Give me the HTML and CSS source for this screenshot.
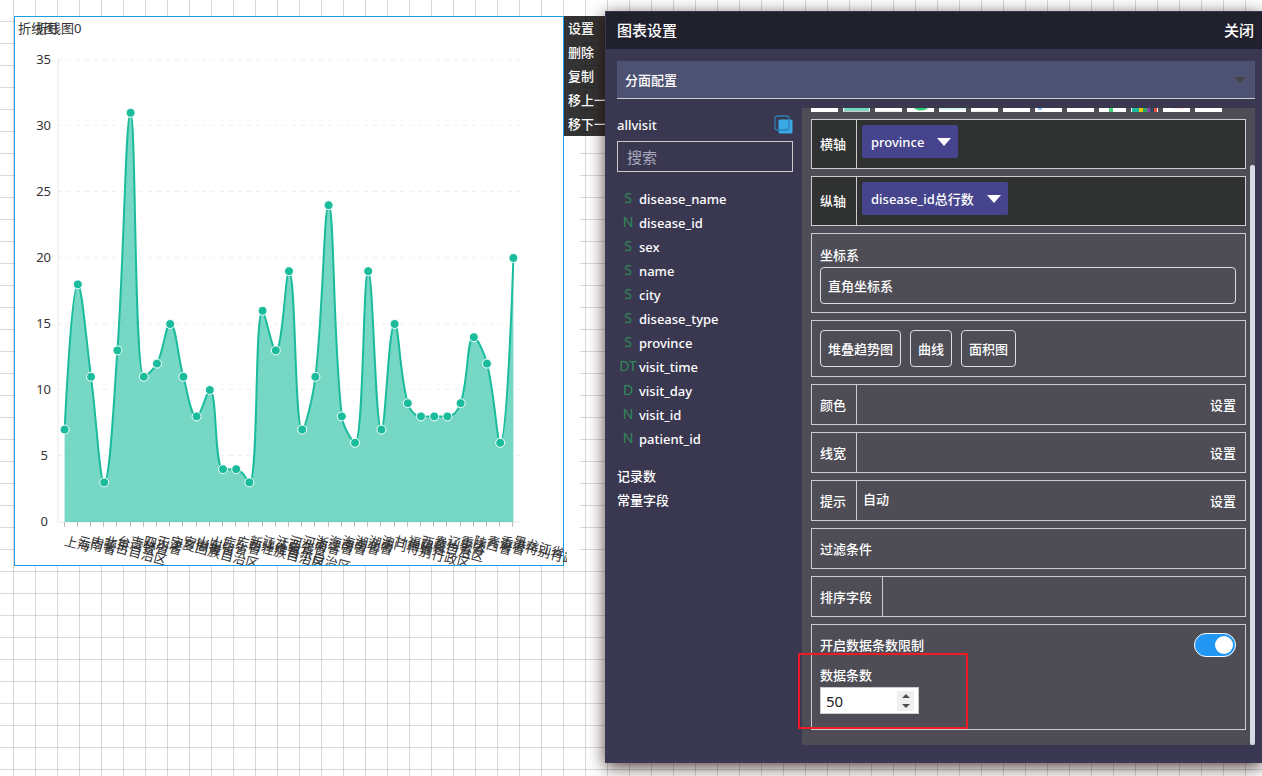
FILE: index.html
```html
<!DOCTYPE html>
<html lang="zh-CN">
<head>
<meta charset="utf-8">
<title>图表设置</title>
<link rel="stylesheet" href="styles.css">
</head>
<body>
<main class="board">
  <section class="widget">
    <div class="widget-frame">
      <svg class="chart" id="chart" width="552" height="548" role="img" aria-label="折线图0"></svg>
    </div>
    <div class="widget-menu">
      <button>设置</button>
      <button>删除</button>
      <button>复制</button>
      <button>移上一层</button>
      <button>移下一层</button>
    </div>
  </section>

  <section class="panel">
    <header class="panel-head">
      <h1>图表设置</h1>
      <button class="plain close">关闭</button>
    </header>
    <div class="panel-body">
      <div class="facet">
        <select class="facet-select" aria-label="分面配置"><option>分面配置</option></select>
        <svg class="facet-arrow" width="12" height="7"><path d="M0 0H12L6 7Z" fill="#46464a"/></svg>
      </div>
      <div class="columns">
        <aside class="fields">
          <div class="source">
            <span>allvisit</span>
            <button class="plain copy" aria-label="复制">
              <svg width="19" height="19"><rect x="4.500" y="4.500" width="14" height="14" rx="1.500" fill="#38a9e4"/><rect x="1" y="1" width="14" height="14" rx="2.500" fill="none" stroke="#2e7fb3" stroke-width="1.300"/></svg>
            </button>
          </div>
          <input class="search" type="text" placeholder="搜索" aria-label="搜索">
          <ul class="field-list">
            <li><i>S</i><span>disease_name</span></li>
            <li><i>N</i><span>disease_id</span></li>
            <li><i>S</i><span>sex</span></li>
            <li><i>S</i><span>name</span></li>
            <li><i>S</i><span>city</span></li>
            <li><i>S</i><span>disease_type</span></li>
            <li><i>S</i><span>province</span></li>
            <li><i>DT</i><span>visit_time</span></li>
            <li><i>D</i><span>visit_day</span></li>
            <li><i>N</i><span>visit_id</span></li>
            <li><i>N</i><span>patient_id</span></li>
          </ul>
          <ul class="extra-list">
            <li>记录数</li>
            <li>常量字段</li>
          </ul>
        </aside>

        <div class="options">
          <div class="types">
            <span class="thumb"></span>
            <span class="thumb area"></span>
            <span class="thumb ticks"></span>
            <span class="thumb pie"></span>
            <span class="thumb mint"></span>
            <span class="thumb ticks"></span>
            <span class="thumb"></span>
            <span class="thumb dot"></span>
            <span class="thumb"></span>
            <span class="thumb bar"></span>
            <span class="thumb colors"></span>
            <span class="thumb peach"></span>
            <span class="thumb"></span>
          </div>
          <div class="card axis">
            <span class="label">横轴</span>
            <button class="chip">province<svg width="14" height="8"><path d="M0 0H14L7 8Z" fill="#fff"/></svg></button>
          </div>
          <div class="card axis">
            <span class="label">纵轴</span>
            <button class="chip">disease_id总行数<svg width="14" height="8"><path d="M0 0H14L7 8Z" fill="#fff"/></svg></button>
          </div>
          <div class="card stack">
            <label for="coord">坐标系</label>
            <select class="coord" id="coord"><option>直角坐标系</option></select>
          </div>
          <div class="card modes">
            <button>堆叠趋势图</button>
            <button>曲线</button>
            <button>面积图</button>
          </div>
          <div class="card row"><span class="label">颜色</span><span class="value"></span><button class="plain">设置</button></div>
          <div class="card row"><span class="label">线宽</span><span class="value"></span><button class="plain">设置</button></div>
          <div class="card row"><span class="label">提示</span><span class="value">自动</span><button class="plain">设置</button></div>
          <div class="card row"><span class="label open">过滤条件</span></div>
          <div class="card row"><span class="label">排序字段</span></div>
          <div class="card limit">
            <div class="limit-head">
              <label for="limit">开启数据条数限制</label>
              <input class="switch" id="limit" type="checkbox" checked>
            </div>
            <label for="count">数据条数</label>
            <div class="number">
              <input id="count" type="number" value="50">
              <div class="spin">
                <button aria-label="增加"><svg width="8" height="4"><path d="M0 4L4 0L8 4Z" fill="#505050"/></svg></button>
                <button aria-label="减少"><svg width="8" height="4"><path d="M0 0L4 4L8 0Z" fill="#505050"/></svg></button>
              </div>
            </div>
          </div>
          <div class="scroll-thumb"></div>
        </div>
      </div>
    </div>
    <div class="highlight"></div>
  </section>
</main>
<script src="chart.js"></script>
</body>
</html>
```
FILE: styles.css
```css
* { box-sizing: border-box; }

body {
  margin: 0;
  font: 13px/24px "Noto Sans", "Noto Sans CJK SC", sans-serif;
  color: #fff;
}

button, input, select { font: inherit; color: inherit; }
button { cursor: pointer; }
ul { list-style: none; margin: 0; padding: 0; }

.board {
  position: relative;
  height: 100vh;
  overflow: hidden;
  background-color: #fff;
  background-image:
    linear-gradient(90deg, rgba(0, 0, 0, .15) 1px, transparent 1px),
    linear-gradient(rgba(0, 0, 0, .15) 1px, transparent 1px);
  background-size: 22px 22px;
  background-position: 13px 21px;
}

/* chart widget on the free canvas */
.widget {
  position: absolute;
  left: 14px;
  top: 16px;
  width: 566px;
  background: #fff;
}
.widget-frame {
  width: 550px;
  height: 550px;
  border: 1px solid #1b9de2;
}
.chart { display: block; overflow: hidden; }
.chart text { font-size: 13px; fill: #333; }
.chart .grid { stroke: #f0f0f0; stroke-dasharray: 4 5; }
.chart .axis-line { stroke: #f3f3f3; stroke-width: 2; }
.chart .tick { stroke: #bbb; }
.chart .fill { fill: #1abc9c; fill-opacity: .6; }
.chart .line { fill: none; stroke: #1abc9c; stroke-width: 2; }
.chart .point { fill: #1abc9c; stroke: #fff; }

.widget-menu {
  position: absolute;
  left: 550px;
  top: 0;
  display: flex;
  flex-direction: column;
  background: rgba(0, 0, 0, .8);
}
.widget-menu button {
  height: 24px;
  padding: 0 4px;
  border: 0;
  background: none;
  text-align: left;
  white-space: nowrap;
  line-height: 22px;
  font-weight: 500;
}

/* settings window */
.panel {
  position: absolute;
  left: 605px;
  right: 0;
  top: 11px;
  bottom: 13px;
  display: flex;
  flex-direction: column;
  border: 1px solid #3a3850;
  border-right: 0;
  background: #3a3850;
  box-shadow: 0 4px 16px rgba(30, 0, 0, .75);
  font-weight: 500;
}
.panel-head {
  display: flex;
  justify-content: space-between;
  align-items: center;
  height: 37px;
  padding: 0 8px 2px 11px;
  background: #21202d;
}
.panel-head h1, .close { margin: 0; font-size: 15px; font-weight: 500; }
.plain { padding: 0; border: 0; background: none; }

.panel-body {
  flex: 1;
  display: flex;
  flex-direction: column;
  gap: 9px;
  padding: 12px 7px 17px 11px;
  min-height: 0;
}
.facet { position: relative; }
.facet-select {
  display: block;
  appearance: none;
  width: 100%;
  height: 38px;
  padding: 0 8px;
  border: 0;
  border-bottom: 1px solid #d0d0d4;
  border-radius: 0;
  background: #4e5272;
}
.facet-arrow { position: absolute; right: 9px; top: 16px; }

.columns { flex: 1; display: flex; gap: 9px; min-height: 0; }

.fields { width: 176px; padding-top: 4px; }
.source { display: flex; justify-content: space-between; align-items: center; height: 25px; }
.copy svg { display: block; }
.search {
  display: block;
  width: 100%;
  height: 31px;
  margin-top: 4px;
  padding: 0 9px;
  border: 1px solid #ccc;
  background: none;
  font-size: 15px;
}
.search::placeholder { color: #a9a9bd; opacity: 1; font-weight: 400; }
.field-list { margin-top: 15px; }
.field-list li { display: flex; height: 24px; }
.field-list i {
  width: 22px;
  text-align: center;
  color: #2e8b57;
  font-style: normal;
  font-weight: 400;
  font-size: 14px;
  line-height: 22px;
}
.extra-list { margin-top: 13px; }

.options {
  position: relative;
  flex: 1;
  display: flex;
  flex-direction: column;
  gap: 7px;
  min-width: 0;
  padding: 0 9px 15px;
  background: #4e4d56;
}
.types { display: flex; gap: 5px; height: 4px; }
.thumb { width: 27px; background: #fff; }
.thumb.area { background: linear-gradient(90deg, #fff 1px, #76d7c4 1px 26px, #fff 26px); border-bottom: 1px solid #ccc; }
.thumb.ticks { border-bottom: 1px solid #eee; }
.thumb.pie { background: radial-gradient(ellipse 8px 3px at 14px 0, #2ecc71 60%, #fff); }
.thumb.mint { background: linear-gradient(#d9f3ed 2px, #fff 2px); }
.thumb.dot { background: linear-gradient(90deg, #fff 3px, #8ac4ff 3px 7px, #fff 7px) 0 0 / 100% 2px no-repeat #fff; }
.thumb.bar { background: linear-gradient(90deg, #fff 10px, #43cf7c 10px 14px, #fff 14px); }
.thumb.colors { background: linear-gradient(90deg, #fff 1px, #1abc9c 1px 8px, #f1c40f 8px 12px, #27ae60 12px 16px, #8e44ad 16px 19px, #34495e 19px 23px, #e74c3c 23px 26px, #fff 26px); }
.thumb.peach { background: linear-gradient(90deg, #fff 10px, #ffe5da 10px 20px, #fff 20px) 0 0 / 100% 1px no-repeat #fff; }

.card { border: 1px solid #ccc; }
.label {
  display: flex;
  align-items: center;
  padding: 0 10px 0 8px;
  border-right: 1px solid #ccc;
}
.label.open { border-right: 0; }
.axis { display: flex; min-height: 50px; background: #2f3230; }
.axis .chip { margin: 5px; }
.chip {
  display: flex;
  align-items: center;
  gap: 13px;
  height: 33px;
  padding: 0 7px 0 9px;
  border: 0;
  border-radius: 2px;
  background: #45448c;
  font-weight: 500;
}
.stack { display: flex; flex-direction: column; padding: 9px 9px 8px 8px; }
.coord {
  appearance: none;
  width: 100%;
  height: 37px;
  padding: 0 7px;
  border: 1px solid #ddd;
  border-radius: 4px;
  background: none;
}
.modes { display: flex; gap: 9px; padding: 9px 8px; }
.modes button {
  height: 37px;
  padding: 0 7px;
  border: 1px solid #ddd;
  border-radius: 4px;
  background: none;
}
.row { display: flex; min-height: 41px; }
.value { flex: 1; padding: 6px; }
.row .plain { padding: 0 9px 0 8px; }

.limit { padding: 8px 9px 15px 8px; }
.limit > label { display: block; padding-top: 6px; }
.limit-head { display: flex; justify-content: space-between; align-items: center; }
.switch {
  appearance: none;
  display: flex;
  width: 42px;
  height: 24px;
  margin: 0;
  padding: 2px;
  border: 1px solid #fff;
  border-radius: 12px;
  background: #2196f3;
}
.switch::before {
  content: "";
  width: 18px;
  height: 18px;
  border-radius: 9px;
  background: #fff;
}
.switch:checked { justify-content: flex-end; }
.number {
  display: flex;
  align-items: center;
  width: 99px;
  height: 27px;
  padding: 0 4px 0 5px;
  border: 1px solid #ccc;
  background: #fff;
}
.number input {
  flex: 1;
  min-width: 0;
  padding: 0;
  border: 0;
  appearance: textfield;
  background: none;
  color: #222;
  font-size: 15px;
  font-weight: 400;
}
.number input::-webkit-inner-spin-button { appearance: none; }
.spin { display: flex; flex-direction: column; width: 17px; height: 20px; background: #f0f0f0; }
.spin button {
  flex: 1;
  display: flex;
  align-items: center;
  justify-content: center;
  padding: 0;
  border: 0;
  background: none;
}
.scroll-thumb {
  position: absolute;
  right: 0;
  top: 57px;
  bottom: 0;
  width: 5px;
  border-radius: 2px;
  background: #d5dae3;
}
.highlight {
  position: absolute;
  left: 192px;
  top: 641px;
  width: 170px;
  height: 76px;
  border: 2px solid #ed1c24;
  pointer-events: none;
}
```
FILE: chart.js
```js
const values = [7, 18, 11, 3, 13, 31, 11, 12, 15, 11, 8, 10, 4, 4, 3, 16, 13, 19,
  7, 11, 24, 8, 6, 19, 7, 15, 9, 8, 8, 8, 9, 14, 12, 6, 20];
const names = ['上海', '云南省', '内蒙古自治区', '北京', '台湾省', '吉林省', '四川省', '天津',
  '宁夏回族自治区', '安徽省', '山东省', '山西省', '广东省', '广西壮族自治区', '新疆维吾尔自治区',
  '江苏省', '江西省', '河北省', '河南省', '浙江省', '海南省', '海南省', '湖北省', '湖南',
  '澳门特别行政区', '甘肃省', '福建省', '西藏自治区', '贵州省', '辽宁省', '重庆', '陕西省',
  '青海省', '香港特别行政区', '黑龙江省'];
const svg = document.getElementById('chart');
const left = 43, right = 505, bottom = 505, unit = 13.2;

function add(tag, attrs, text) {
  const el = document.createElementNS('http://www.w3.org/2000/svg', tag);
  for (const key in attrs) el.setAttribute(key, attrs[key]);
  if (text) el.textContent = text;
  svg.appendChild(el);
}

const points = values.map((v, i) => [left + unit / 2 + i * unit, bottom - v * unit]);

for (let v = 0; v <= 35; v += 5) {
  const y = Math.round(bottom - v * unit) - 0.5;
  if (v) add('line', { class: 'grid', x1: left, x2: right, y1: y, y2: y });
  add('text', { x: 36 - (v > 5 ? 0 : 3), y: y + 4, 'text-anchor': 'end' }, String(v));
}
add('line', { class: 'axis-line', x1: left, x2: left, y1: 43, y2: bottom });
add('line', { class: 'axis-line', x1: left, x2: right, y1: bottom, y2: bottom });

// Smooth curve whose control points stay between neighbouring values.
const smooth = 0.4;
const clamp = (v, a, b) => Math.max(Math.min(a, b), Math.min(Math.max(a, b), v));
function controls(i) {
  const p = points[i], a = points[i - 1], b = points[i + 1];
  if (!a || !b) return [p, p];
  const la = Math.hypot(p[0] - a[0], p[1] - a[1]);
  const lb = Math.hypot(b[0] - p[0], b[1] - p[1]);
  const out = [0, 1].map(k => clamp(p[k] + (b[k] - a[k]) * smooth * lb / (la + lb), p[k], b[k]));
  const into = [0, 1].map(k => clamp(p[k] - (out[k] - p[k]) * la / lb, a[k], p[k]));
  return [into, [0, 1].map(k => p[k] + (p[k] - into[k]) * lb / la)];
}
let path = 'M' + points[0];
for (let i = 1; i < points.length; i++) {
  path += 'C' + [controls(i - 1)[1], controls(i)[0], points[i]].join(' ');
}
add('path', { class: 'fill', d: path + 'V' + bottom + 'H' + points[0][0] + 'Z' });
add('path', { class: 'line', d: path });

points.forEach(([x, y], i) => {
  const tx = Math.round(x) - 0.5;
  add('line', { class: 'tick', x1: tx, x2: tx, y1: bottom, y2: bottom + 5 });
  add('circle', { class: 'point', cx: x, cy: y, r: 4.5 });
  add('text', { transform: `translate(${x - 1} ${bottom + 23}) rotate(15)` }, names[i]);
});

add('text', { x: 3, y: 16 }, '折线图');
add('text', { x: 20, y: 16 }, '折线图0');
```
